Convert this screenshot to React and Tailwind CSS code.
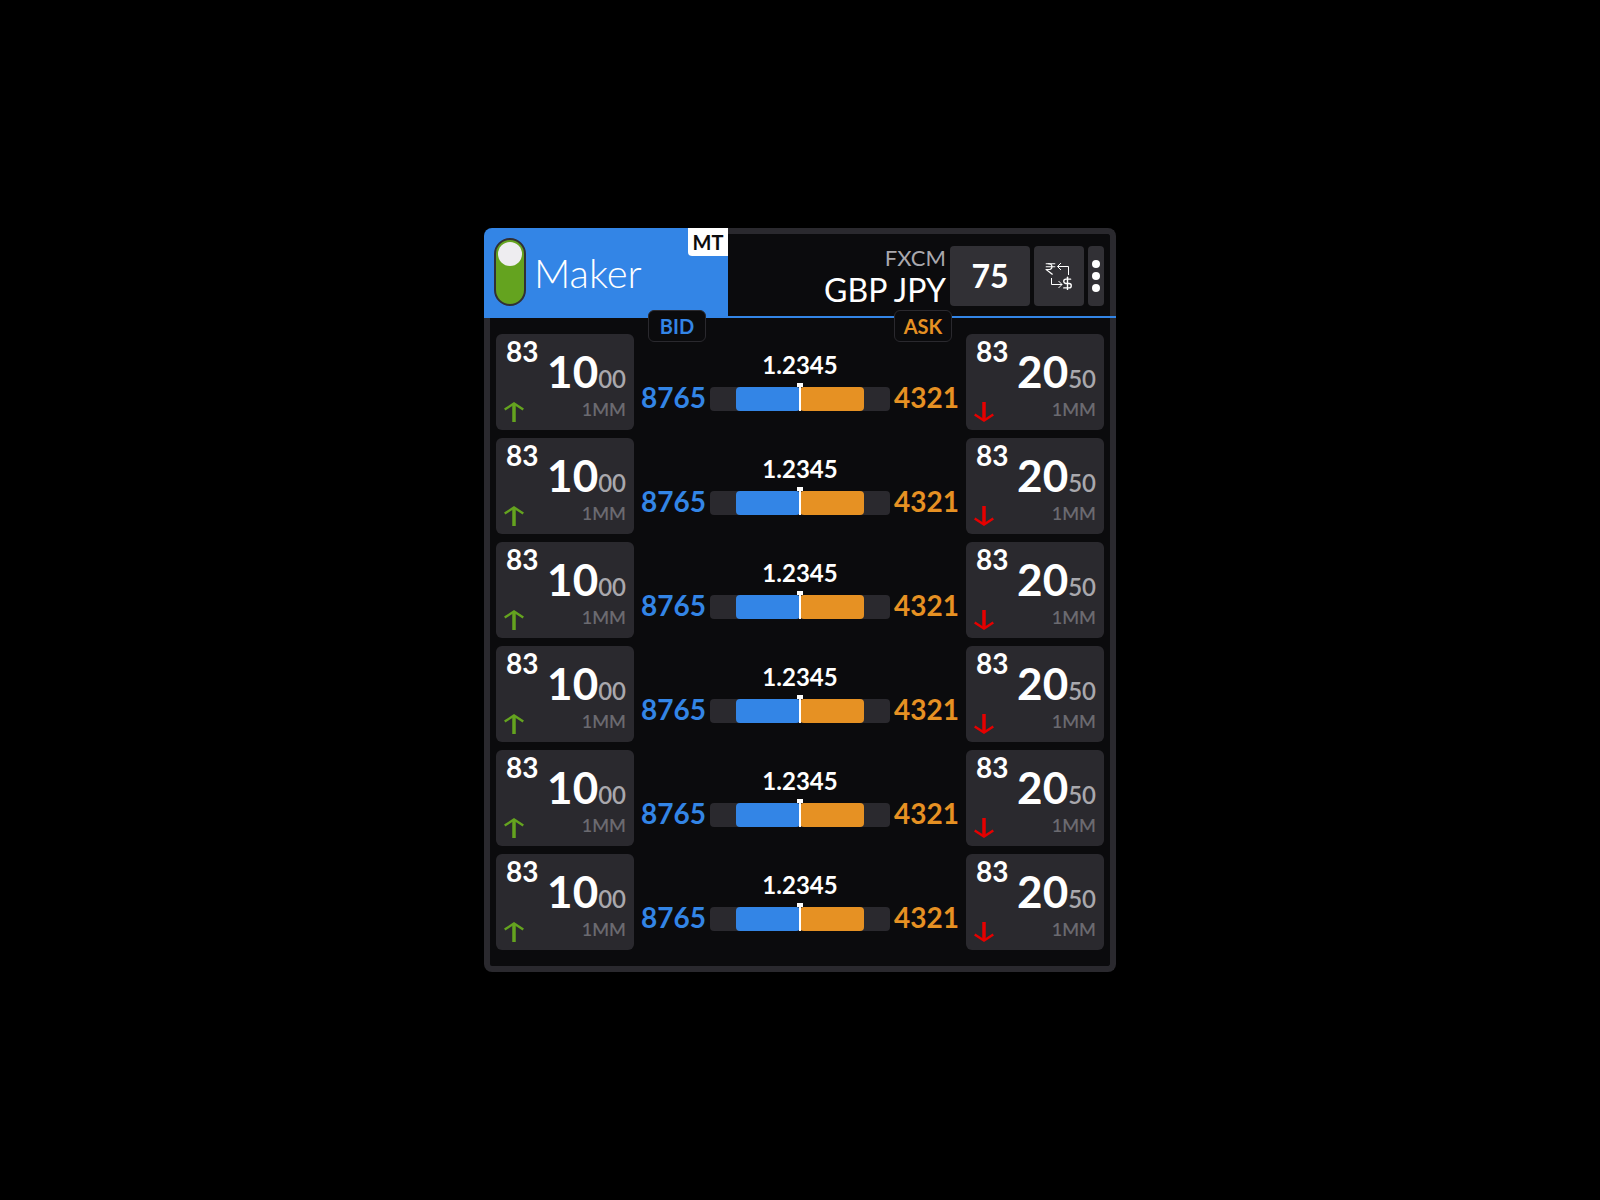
import React, { useState } from 'react'
import { DollarSign, IndianRupee } from 'lucide-react'

const rows = Array.from({ length: 6 }, (_, id) => ({
  id,
  bid: { figure: '83', pips: '10', fraction: '00', size: '1MM' },
  ask: { figure: '83', pips: '20', fraction: '50', size: '1MM' },
  bidVolume: '8765',
  askVolume: '4321',
  mid: '1.2345',
  bidShare: 71,
  askShare: 71,
}))

function UpArrow() {
  return (
    <svg className="size-5 text-[#64a31f]" viewBox="0 0 20 20" fill="none" stroke="currentColor" aria-hidden="true">
      <path d="M10 20V2" strokeWidth="3.5" />
      <path d="M0.7 7.5L10 1.5L19.3 7.5" strokeWidth="2.4" />
    </svg>
  )
}

function DownArrow() {
  return (
    <svg className="size-5 text-[#e60000]" viewBox="0 0 20 20" fill="none" stroke="currentColor" aria-hidden="true">
      <path d="M10 0V18" strokeWidth="3.5" />
      <path d="M0.7 12.5L10 18.5L19.3 12.5" strokeWidth="2.4" />
    </svg>
  )
}

function SwapIcon() {
  return (
    <svg className="size-7" viewBox="0 0 28 28" fill="none" stroke="currentColor" strokeWidth="1" aria-hidden="true">
      <IndianRupee x="-3" y="0" width="17" height="14" strokeWidth="1.8" preserveAspectRatio="none" />
      <path d="M23.5 13V4.5H12.5M16 1L12.5 4.5L16 8" />
      <path d="M6.5 16V22.5H17M13.5 19L17 22.5L13.5 26" />
      <DollarSign x="15" y="14" width="15" height="15" strokeWidth="2.2" overflow="visible" />
    </svg>
  )
}

function PriceButton({ quote, children }) {
  return (
    <button type="button" className="flex h-24 justify-between rounded-md bg-[#2a292e] px-2">
      <span className="flex h-full flex-col items-start justify-between pt-[3px] pb-2">
        <span className="pl-0.5 text-[28px] leading-7 font-bold">{quote.figure}</span>
        {children}
      </span>
      <span className="flex flex-col items-end gap-1.5 pt-[15px]">
        <span className="flex items-baseline text-[44px] leading-[44px] font-bold">
          {quote.pips}
          <span className="text-2xl leading-6 font-semibold text-[#a9a8ad]">{quote.fraction}</span>
        </span>
        <span className="text-lg leading-5 font-semibold text-[#6b6a70]">{quote.size}</span>
      </span>
    </button>
  )
}

function DepthBar({ row }) {
  return (
    <div className="relative flex h-6 rounded bg-[#2a292e]">
      <div className="flex flex-1 justify-end">
        <div className="rounded bg-[#3385e6]" style={{ width: `${row.bidShare}%` }} />
      </div>
      <div className="flex flex-1">
        <div className="rounded bg-[#e69123]" style={{ width: `${row.askShare}%` }} />
      </div>
      <div className="absolute inset-x-0 -top-1 bottom-0 flex flex-col items-center">
        <div className="h-1 w-1.5 bg-white" />
        <div className="w-0.5 flex-1 bg-white" />
      </div>
    </div>
  )
}

function LadderRow({ row }) {
  return (
    <li className="grid grid-cols-[138px_1fr_138px]">
      <PriceButton quote={row.bid}>
        <UpArrow />
      </PriceButton>
      <div className="pt-[17px] font-bold">
        <div className="text-center text-2xl leading-7">{row.mid}</div>
        <div className="mt-1 grid grid-cols-[1fr_180px_1fr] items-end gap-1 text-[28px] leading-7">
          <span className="text-right text-[#3385e6]">{row.bidVolume}</span>
          <DepthBar row={row} />
          <span className="text-[#e69123]">{row.askVolume}</span>
        </div>
      </div>
      <PriceButton quote={row.ask}>
        <DownArrow />
      </PriceButton>
    </li>
  )
}

function Header({ active, onToggle }) {
  return (
    <header className="flex border-b-2 border-[#3385e6]">
      <div className="flex w-[244px] justify-between rounded-tl-lg bg-[#3385e6] pl-2.5">
        <label className="flex items-center">
          <input
            type="checkbox"
            checked={active}
            onChange={onToggle}
            className="h-[68px] w-8 appearance-none rounded-full border-2 border-[#313035] bg-[#64a31f] p-0.5 before:block before:size-6 before:rounded-full before:bg-[#eeedf0]"
          />
          <span className="ml-2 pt-0.5 text-[40px] leading-[48px] font-light">Maker</span>
        </label>
        <span className="h-7 w-10 rounded-bl bg-white text-center text-xl leading-7 font-bold text-[#0b0b0d]">MT</span>
      </div>
      <div className="flex flex-1 justify-end gap-1 rounded-tr-lg border-t-6 border-r-6 border-[#2a292e] bg-[#0b0b0d] pt-3 pr-1.5 pb-2.5">
        <div className="flex flex-col gap-1 text-right">
          <span className="text-[22px] leading-6 text-[#a9a8ad]">FXCM</span>
          <span className="text-[32px] leading-8">GBP JPY</span>
        </div>
        <button type="button" className="h-[60px] w-20 rounded bg-[#313035] text-[32px] leading-8 font-bold">
          75
        </button>
        <button type="button" aria-label="Swap currency" className="flex w-[50px] items-center justify-center rounded bg-[#313035]">
          <SwapIcon />
        </button>
        <button type="button" aria-label="More" className="flex w-4 flex-col items-center justify-center gap-1 rounded bg-[#313035]">
          <i className="size-2 rounded-full bg-white" />
          <i className="size-2 rounded-full bg-white" />
          <i className="size-2 rounded-full bg-white" />
        </button>
      </div>
    </header>
  )
}

export default function App() {
  const [active, setActive] = useState(true)

  return (
    <main className="flex min-h-screen items-center justify-center bg-black font-['Lato',sans-serif] text-white">
      <section className="w-full max-w-[632px]">
        <Header active={active} onToggle={() => setActive(!active)} />
        <div className="relative rounded-b-lg border-x-6 border-b-6 border-[#2a292e] bg-[#0b0b0d] px-1.5 py-4">
          <div className="absolute inset-x-[158px] -top-2 flex justify-between text-center text-xl leading-[30px] font-bold">
            <span className="w-[58px] rounded-md border border-[#2a292e] bg-[#0b0b0d] text-[#3385e6]">BID</span>
            <span className="w-[58px] rounded-md border border-[#2a292e] bg-[#0b0b0d] text-[#e69123]">ASK</span>
          </div>
          <ul className="flex flex-col gap-2">
            {rows.map((row) => (
              <LadderRow key={row.id} row={row} />
            ))}
          </ul>
        </div>
      </section>
    </main>
  )
}
